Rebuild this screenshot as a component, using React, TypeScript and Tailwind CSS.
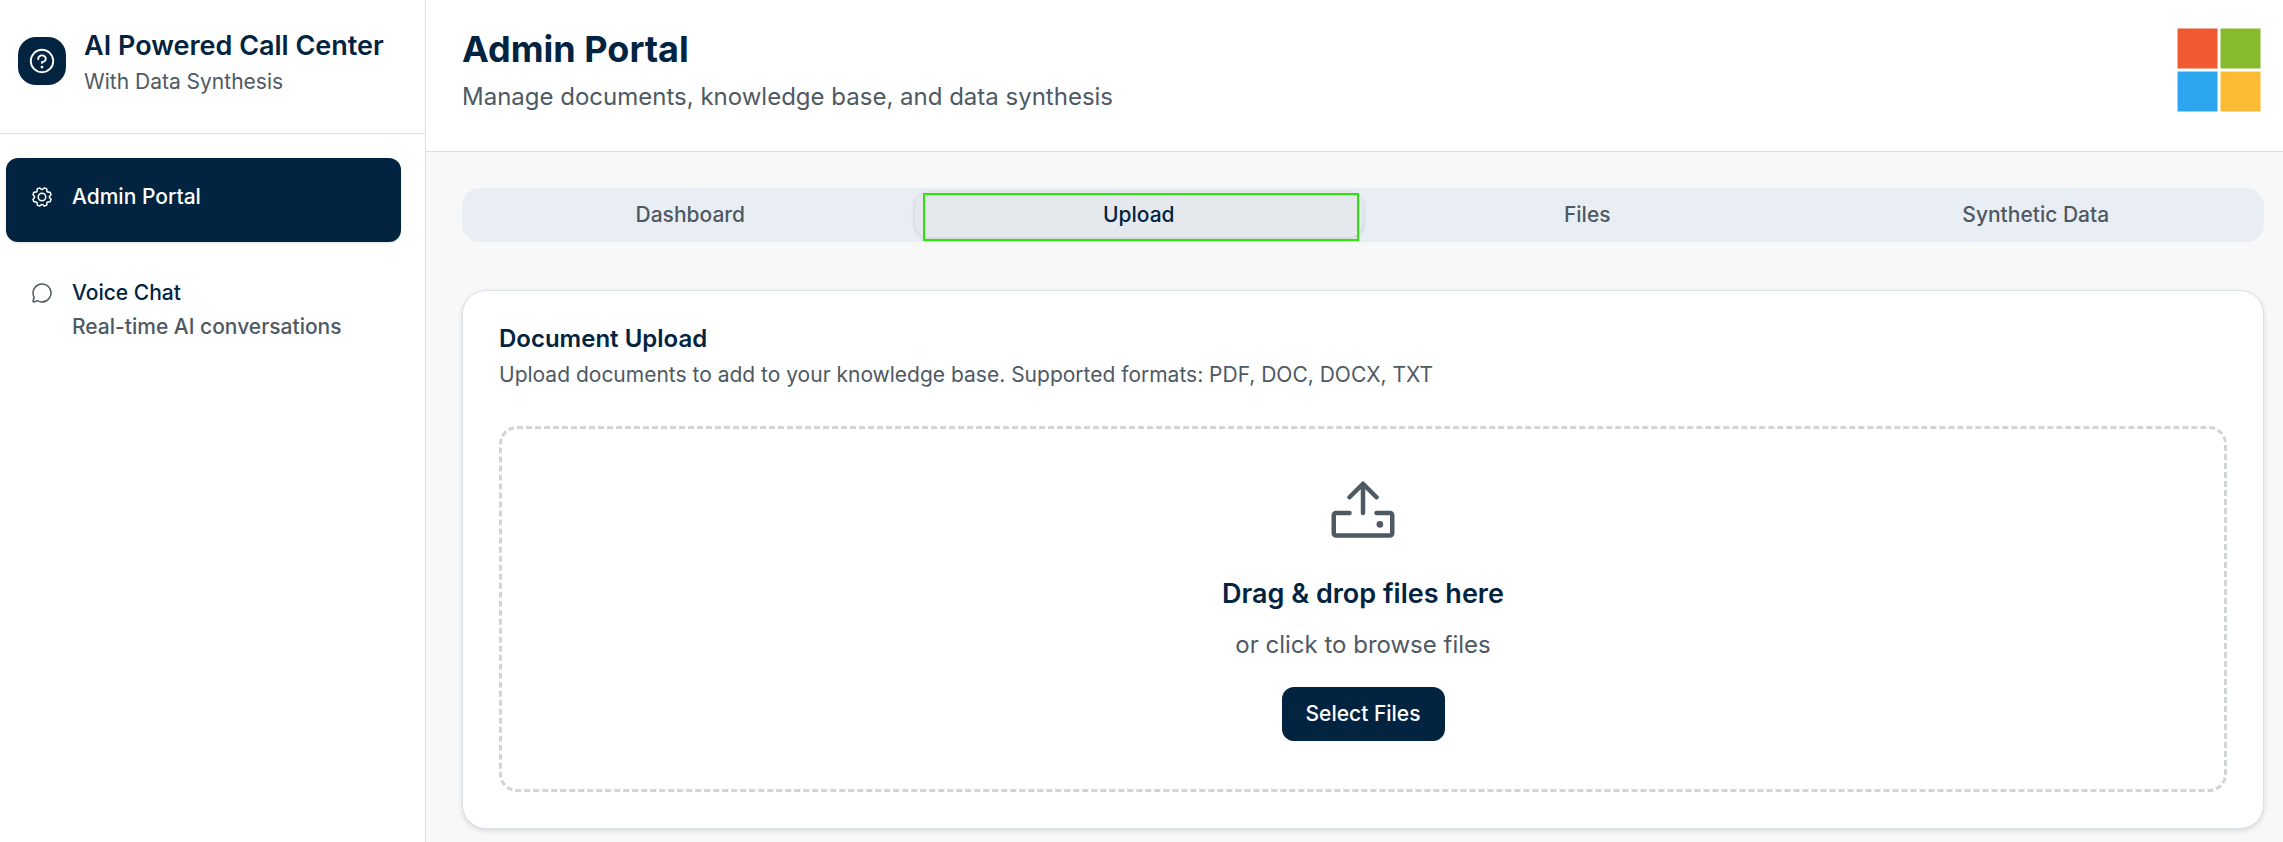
import { useState } from "react";
import { PiChatCircle, PiGear, PiQuestion, PiUpload } from "react-icons/pi";

const tabs = ["Dashboard", "Upload", "Files", "Synthetic Data"];

function Sidebar() {
  return (
    <aside className="w-[426px] shrink-0 border-r border-[#dbdfe6] bg-white">
      <div className="flex h-[134px] items-start gap-[18px] border-b border-[#dbdfe6] pt-7 pl-[18px]">
        <div className="mt-[9px] flex size-12 shrink-0 items-center justify-center rounded-[18px] bg-[#022441] text-white">
          <PiQuestion size={30} />
        </div>
        <div>
          <h2 className="text-[27px] leading-[36px] font-semibold">AI Powered Call Center</h2>
          <p className="text-[21px] leading-[36px] text-[#4e5963]">With Data Synthesis</p>
        </div>
      </div>
      <nav className="flex flex-col gap-3 pt-6 pr-6 pl-[6px]">
        <a href="#admin" className="flex h-[84px] items-start gap-[18px] rounded-xl bg-[#022441] px-6 pt-[21px] text-white shadow-sm">
          <PiGear size={24} className="mt-[6px] shrink-0" />
          <span className="text-[21px] leading-[36px] font-medium">Admin Portal</span>
        </a>
        <a href="#voice" className="flex items-start gap-[18px] rounded-xl px-6 py-[21px]">
          <PiChatCircle size={24} className="mt-[6px] shrink-0 text-[#4e5963]" />
          <span className="flex flex-col text-[21px] font-medium">
            <span className="leading-[36px]">Voice Chat</span>
            <span className="leading-[32px] text-[#4e5963]">Real-time AI conversations</span>
          </span>
        </a>
      </nav>
    </aside>
  );
}

function Logo() {
  return (
    <svg viewBox="0 0 84 84" className="size-[84px]" role="img" aria-label="Company logo">
      <rect x="0.5" y="0.5" width="40" height="40" fill="#ef5a33" />
      <rect x="43.5" y="0.5" width="40" height="40" fill="#88ba2e" />
      <rect x="0.5" y="43.5" width="40" height="40" fill="#2ba5ee" />
      <rect x="43.5" y="43.5" width="40" height="40" fill="#fcbb35" />
    </svg>
  );
}

export default function App() {
  const [active, setActive] = useState("Upload");

  return (
    <div className="flex min-h-screen bg-[#f8f8f8] font-['Inter',sans-serif] text-[#022441]">
      <Sidebar />
      <main className="min-w-0 flex-1">
        <header className="flex h-[152px] items-start justify-between border-b border-[#dbdfe6] bg-white pt-7 pr-[22px] pl-9">
          <div>
            <h1 className="text-[36px] leading-[42px] font-bold">Admin Portal</h1>
            <p className="mt-[9px] text-[24px] leading-[36px] text-[#4e5963]">Manage documents, knowledge base, and data synthesis</p>
          </div>
          <Logo />
        </header>

        <div className="pt-9 pr-[19px] pb-3 pl-9">
          <div role="tablist" className="grid h-[54px] grid-cols-4 rounded-[18px] bg-[#e9eef5] px-1 pt-1 pb-[5px]">
            {tabs.map((tab) => (
              <button
                key={tab}
                type="button"
                role="tab"
                aria-selected={tab === active}
                onClick={() => setActive(tab)}
                className={
                  tab === active
                    ? "relative rounded-[14px] bg-[#e5e9ed] text-[21px] font-medium shadow-[0_1px_4px_rgba(0,0,0,0.16)]"
                    : "rounded-[14px] text-[21px] font-medium text-[#4e5963]"
                }
              >
                {tab}
                {tab === active && (
                  <span className="pointer-events-none absolute top-px right-1 -bottom-1 left-2 border-2 border-[#2be50b]" />
                )}
              </button>
            ))}
          </div>

          <section className="mt-12 rounded-[24px] border border-[#dbdfe6] bg-white p-9 shadow-[0_2px_5px_rgba(0,0,0,0.12)]">
            <h2 className="text-[24px] leading-[24px] font-semibold">Document Upload</h2>
            <p className="mt-[9px] text-[21px] leading-[30px] text-[#4e5963]">
              Upload documents to add to your knowledge base. Supported formats: PDF, DOC, DOCX, TXT
            </p>
            <div className="mt-9 flex flex-col items-center rounded-[18px] border-3 border-dashed border-[#d1d5d8] px-12 py-12">
              <PiUpload size={72} className="text-[#4e5963]" />
              <p className="mt-6 text-[27px] leading-[42px] font-semibold">Drag &amp; drop files here</p>
              <p className="mt-3 text-[24px] leading-[36px] text-[#4e5963]">or click to browse files</p>
              <button type="button" className="mt-6 h-[54px] rounded-xl bg-[#022441] px-6 text-[21px] font-medium text-white">
                Select Files
              </button>
            </div>
          </section>
        </div>
      </main>
    </div>
  );
}
